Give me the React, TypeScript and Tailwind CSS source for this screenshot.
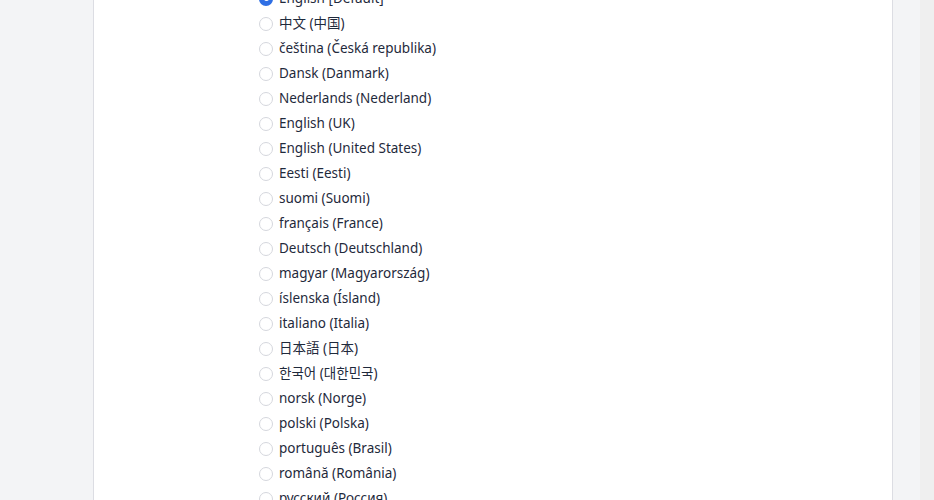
import React from "react";

const langs = [
  "English [Default]",
  "中文 (中国)",
  "čeština (Česká republika)",
  "Dansk (Danmark)",
  "Nederlands (Nederland)",
  "English (UK)",
  "English (United States)",
  "Eesti (Eesti)",
  "suomi (Suomi)",
  "français (France)",
  "Deutsch (Deutschland)",
  "magyar (Magyarország)",
  "íslenska (Ísland)",
  "italiano (Italia)",
  "日本語 (日本)",
  "한국어 (대한민국)",
  "norsk (Norge)",
  "polski (Polska)",
  "português (Brasil)",
  "română (România)",
  "русский (Россия)",
];

export default function App() {
  return (
    <div
      className="flex h-[500px] w-[934px] overflow-hidden bg-[#f3f4f6]"
      style={{ fontFamily: '"Noto Sans", "Noto Sans CJK SC", sans-serif' }}
    >
      <div className="flex-1">
        <div className="ml-[93px] flex h-full w-[800px] flex-col border-x border-[#dcdde3] bg-white">
          <div className="-mt-[14px] pl-[165px]">
            {langs.map((l, i) => (
              <label key={l} className="flex h-[25px] items-center">
                {i === 0 ? (
                  <span className="flex h-[14px] w-[14px] items-center justify-center rounded-full bg-[#2f6fe4]">
                    <span className="h-[5px] w-[5px] rounded-full bg-white" />
                  </span>
                ) : (
                  <span className="h-[14px] w-[14px] rounded-full border border-[#d5d7dd] bg-white" />
                )}
                <span className="ml-[6px] text-[13.5px] text-[#1f2a3c]">{l}</span>
              </label>
            ))}
          </div>
        </div>
      </div>
      <div className="w-[14px] bg-[#efefef]" />
    </div>
  );
}
